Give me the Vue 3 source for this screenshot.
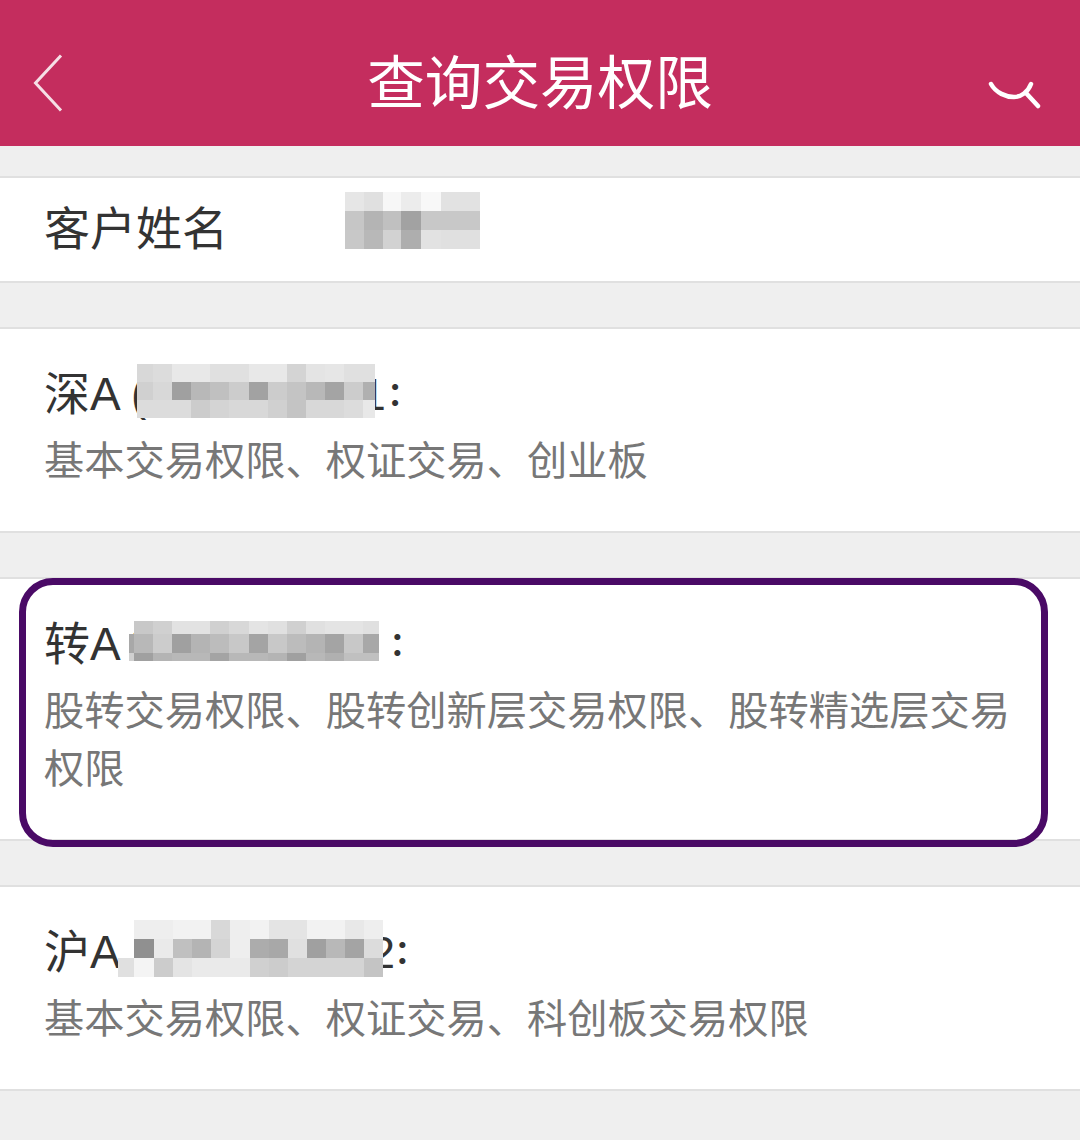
<script setup>
const W = 'transparent'
const hex = (v) => (v === '' ? W : '#' + v + v + v)
const grid = (cols, rows, colors) => ({
  cols: cols.map((c) => c + 'px').join(' '),
  rows: rows.map((r) => r + 'px').join(' '),
  cells: colors.flat().map(hex)
})

const nameMosaic = grid(
  [19, 19, 18, 20, 20, 19, 20],
  [19, 19, 19],
  [
    ['e6', 'e0', 'f7', 'ec', 'f8', 'e2', 'e2'],
    ['c6', 'b4', 'c0', 'a2', 'c8', 'c8', 'c8'],
    ['c8', 'b8', 'd2', 'ae', 'e2', 'e0', 'e0']
  ]
)
const szMosaic = grid(
  [16, 19, 19, 19, 19, 20, 19, 19, 19, 19, 19, 19, 12],
  [18, 18, 18],
  [
    ['d8', 'dc', 'e8', 'e8', 'e0', 'e0', 'e8', 'e8', 'd4', 'e4', 'e6', 'e0', 'e0'],
    ['d0', 'd8', 'a0', 'b8', 'c0', 'cc', 'a2', 'cc', 'c4', 'b8', 'a4', 'cc', 'b0'],
    ['dc', 'dc', 'dc', 'cc', 'd4', 'd8', 'd8', 'd0', 'c4', 'd8', 'd8', 'dc', 'e8']
  ]
)
const zhMosaic = grid(
  [5, 19, 19, 19, 19, 19, 20, 19, 19, 19, 19, 19, 19, 16],
  [13, 19, 8],
  [
    ['', 'c8', 'd0', 'e2', 'e2', 'd0', 'd8', 'e4', 'e0', 'd0', 'e0', 'e4', 'e4', 'e0'],
    ['a8', 'b8', 'cc', 'a0', 'b4', 'bc', 'c8', 'a4', 'c8', 'bc', 'b4', 'a4', 'c8', 'a8'],
    ['d0', 'a0', 'b4', 'b8', 'b8', 'a4', 'b8', 'b8', 'b4', 'a0', 'b8', 'b0', 'c0', 'c0']
  ]
)
const shMosaic = grid(
  [16, 20, 19, 19, 19, 19, 20, 19, 19, 19, 19, 19, 19, 19],
  [19, 19, 19],
  [
    ['', 'ee', 'ee', 'f2', 'f2', 'd8', 'ee', 'f2', 'e4', 'e4', 'f2', 'f2', 'e8', 'ee'],
    ['', '90', 'ea', 'c0', 'b4', 'd4', 'ee', 'ac', 'a8', 'e0', 'a0', 'b8', 'a4', 'dc'],
    ['e0', 'f4', 'cc', 'e4', 'ea', 'ea', 'ea', 'd0', 'cc', 'd4', 'd4', 'd4', 'd4', 'c4']
  ]
)
</script>

<template>
  <div class="page">
    <header class="bar">
      <svg class="back" width="30" height="58" viewBox="0 0 30 58" fill="none">
        <path d="M28 1.500 L2.500 29 L28 56.500" stroke="#f6dfe6" stroke-width="3" />
      </svg>
      <h1 class="title">查询交易权限</h1>
      <svg class="search" width="54" height="30" viewBox="0 0 54 30" fill="none">
        <path d="M3 5 C8 14 18 18 26 18 C33 18 40 13 43 5" stroke="#fff" stroke-width="4.500" stroke-linecap="round" />
        <path d="M38 14 L50 27" stroke="#fff" stroke-width="4.500" stroke-linecap="round" />
      </svg>
    </header>

    <section class="row row-name">
      <div class="label">
        客户姓名
        <div class="mosaic m-name" :style="{ gridTemplateColumns: nameMosaic.cols, gridTemplateRows: nameMosaic.rows }">
          <i v-for="(c, i) in nameMosaic.cells" :key="i" :style="{ background: c }"></i>
        </div>
      </div>
    </section>

    <section class="row">
      <div class="label">
        深A (<span class="digits d-sz">000000001</span><span class="colon c-sz">:</span>
        <div class="mosaic m-sz" :style="{ gridTemplateColumns: szMosaic.cols, gridTemplateRows: szMosaic.rows }">
          <i v-for="(c, i) in szMosaic.cells" :key="i" :style="{ background: c }"></i>
        </div>
      </div>
      <p class="sub">基本交易权限、权证交易、创业板</p>
    </section>

    <section class="row">
      <div class="label">
        转A<span class="digits d-zh">0000000001</span><span class="colon c-zh">:</span>
        <div class="mosaic m-zh" :style="{ gridTemplateColumns: zhMosaic.cols, gridTemplateRows: zhMosaic.rows }">
          <i v-for="(c, i) in zhMosaic.cells" :key="i" :style="{ background: c }"></i>
        </div>
      </div>
      <p class="sub">股转交易权限、股转创新层交易权限、股转精选层交易权限</p>
      <div class="ring"></div>
    </section>

    <section class="row">
      <div class="label">
        沪A<span class="digits d-sh">0000000002</span><span class="colon c-sh">:</span>
        <div class="mosaic m-sh" :style="{ gridTemplateColumns: shMosaic.cols, gridTemplateRows: shMosaic.rows }">
          <i v-for="(c, i) in shMosaic.cells" :key="i" :style="{ background: c }"></i>
        </div>
      </div>
      <p class="sub">基本交易权限、权证交易、科创板交易权限</p>
    </section>
  </div>
</template>

<style scoped>
.page {
  height: 1140px;
  overflow: hidden;
  background: #efefef;
  font-family: "Liberation Sans", "Noto Sans CJK SC", sans-serif;
}
.bar {
  height: 146px;
  margin-bottom: 30px;
  padding: 20px 35px 0;
  box-sizing: border-box;
  background: #c42d5e;
  display: grid;
  grid-template-columns: 1fr auto 1fr;
  align-items: center;
}
.back {
  margin-left: -2px;
}
.title {
  margin: 0;
  color: #fff;
  font-size: 57.600px;
  font-weight: 400;
  line-height: 70px;
  position: relative;
  top: 1px;
}
.search {
  justify-self: end;
  margin-right: 3px;
  margin-top: 22px;
}
.row {
  position: relative;
  background: #fff;
  border-top: 2px solid #e0e0e0;
  border-bottom: 2px solid #e0e0e0;
  padding: 35px 44px 40.500px;
  margin-bottom: 44px;
}
.row-name {
  padding-top: 21px;
  padding-bottom: 22px;
}
.label {
  position: relative;
  height: 60px;
  font-size: 46px;
  line-height: 60px;
  color: #333;
  white-space: nowrap;
}
.digits {
  font-size: 45px;
  line-height: 0;
}
.d-sz {
  letter-spacing: 1.800px;
}
.d-zh {
  margin-left: 9px;
}
.d-sh {
  margin-left: 15px;
  letter-spacing: 1px;
}
.colon {
  position: relative;
  top: -4px;
  font-family: Inter, sans-serif;
  font-size: 42px;
  font-weight: 500;
  line-height: 0;
}
.c-sz {
  margin-left: 1px;
}
.c-zh {
  margin-left: 11px;
}
.c-sh {
  margin-left: 0;
}
.sub {
  margin: 9px 0 0;
  font-size: 40.250px;
  line-height: 57.500px;
  color: #777;
  width: 970px;
}
.mosaic {
  position: absolute;
  display: grid;
}
.m-name {
  left: 301px;
  top: -7px;
}
.m-sz {
  left: 93px;
  top: 0;
}
.m-zh {
  left: 85px;
  top: 6.500px;
}
.m-sh {
  left: 74px;
  top: -2px;
}
.ring {
  position: absolute;
  left: 18.500px;
  top: -1.500px;
  width: 1029.500px;
  height: 269px;
  box-sizing: border-box;
  border: 7px solid #4a0a66;
  border-radius: 34px;
  pointer-events: none;
}
</style>

<style>
html,
body {
  margin: 0;
  overflow: hidden;
}
</style>
